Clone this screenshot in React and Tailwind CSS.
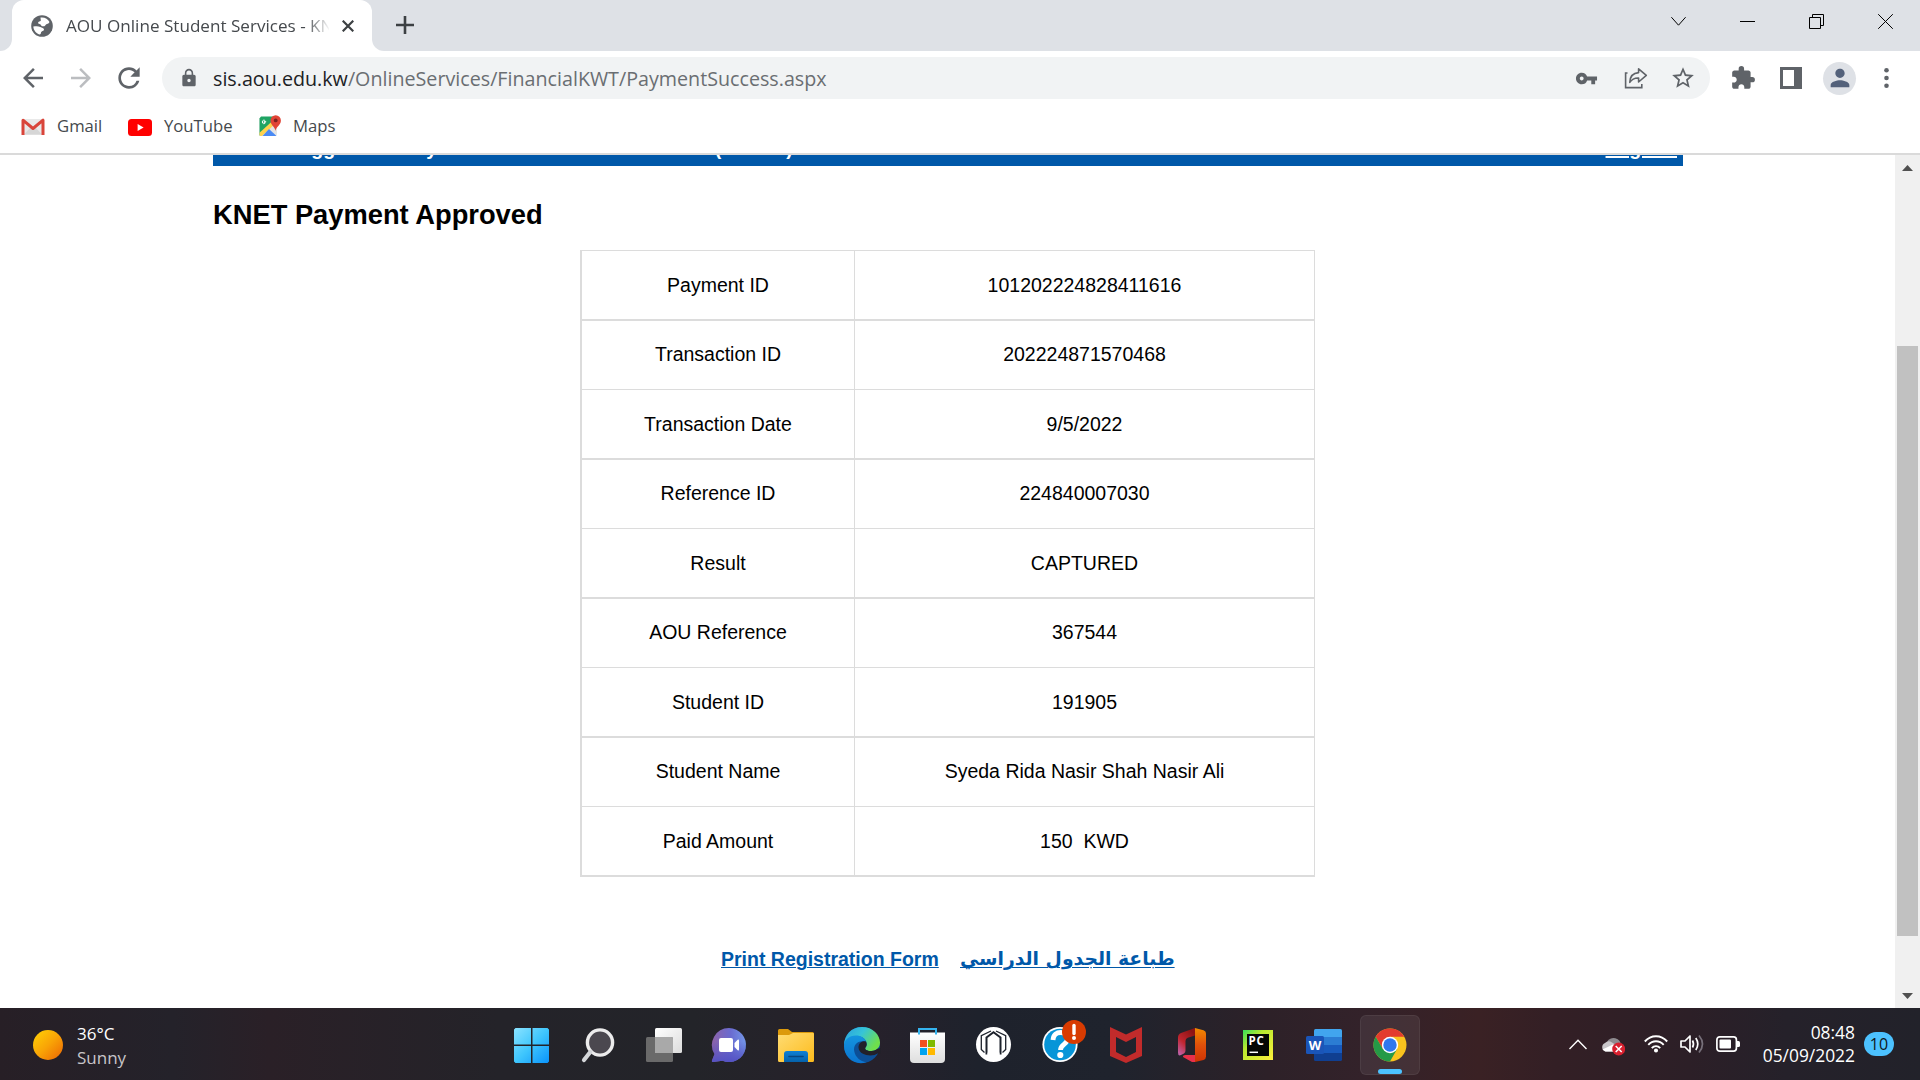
import {
  MdArrowBack,
  MdArrowForward,
  MdExtension,
  MdLock,
  MdPerson,
  MdRefresh,
  MdStarBorder,
  MdVpnKey,
} from "react-icons/md";

const rows = [
  ["Payment ID", "101202224828411616"],
  ["Transaction ID", "202224871570468"],
  ["Transaction Date", "9/5/2022"],
  ["Reference ID", "224840007030"],
  ["Result", "CAPTURED"],
  ["AOU Reference", "367544"],
  ["Student ID", "191905"],
  ["Student Name", "Syeda Rida Nasir Shah Nasir Ali"],
  ["Paid Amount", "150 \u00a0KWD"],
];

function GlobeIcon() {
  return (
    <svg className="size-[22px] shrink-0" viewBox="0 0 22 22">
      <circle cx="11" cy="11" r="10.800" fill="#5f6368" />
      <path
        d="M9.500 2.500c4-.6 7.500 1.200 9 4.500-1 2.200-2.500 1.500-3.500 2.500s-1 2-3 1.800c-2.500-.2-1.500-2-3.500-2.300C6.300 8.600 7 6.500 9 6.300c1.500-.2.500-1.800.500-3.800z"
        fill="#fff"
      />
      <path
        d="M2.300 11.500c3-.500 5.200-.500 7 .500 1.500.900 3.500.800 3.700 2.500.2 1.800-2.800 1.500-3 3 0 1-.300 1.800-1.500 1.900-3.500-1-6-4.200-6.200-7.900z"
        fill="#fff"
      />
    </svg>
  );
}

function TabStrip() {
  return (
    <div className="flex h-[51px] bg-[#dee1e6]">
      <div className="flex w-3 items-end bg-white">
        <div className="h-full w-full rounded-br-[12px] bg-[#dee1e6]" />
      </div>
      <div className="bg-[#dee1e6]">
        <div className="flex h-full w-[360px] items-center rounded-t-[12px] bg-white pl-[19px] pt-px">
          <GlobeIcon />
          <div className="ml-[13px] w-[263px] overflow-hidden whitespace-nowrap pb-px text-[17.1px] text-[#45494d] [mask-image:linear-gradient(to_right,black_240px,transparent_264px)]">
            AOU Online Student Services - KNET
          </div>
          <svg className="ml-[13px] size-3 shrink-0" viewBox="0 0 12 12" stroke="#3c4043" strokeWidth="2.2">
            <path d="M.7.7 11.3 11.3M11.3.7.7 11.3" />
          </svg>
        </div>
      </div>
      <div className="flex w-3 bg-white">
        <div className="h-full w-full rounded-bl-[12px] bg-[#dee1e6]" />
      </div>
      <svg className="ml-[12px] mt-[16px] size-[18px]" viewBox="0 0 18 18" stroke="#3c4043" strokeWidth="2.6">
        <path d="M9 0v18M0 9h18" />
      </svg>
      <div className="ml-auto mr-[27px] flex h-[43px] items-center gap-[54px] text-black">
        <svg className="size-[15px]" viewBox="0 0 15 15" fill="none" stroke="currentColor" strokeWidth="1">
          <path d="M.4 3.200 7.500 11.200 14.600 3.200" />
        </svg>
        <svg className="size-[15px]" viewBox="0 0 15 15" fill="none" stroke="currentColor" strokeWidth="1">
          <path d="M0 7.500h15" />
        </svg>
        <svg className="size-[15px]" viewBox="0 0 15 15" fill="none" stroke="currentColor" strokeWidth="1">
          <path d="M.5 3.500h11v11H.5zM3.500 3.500v-3h11v11h-3" />
        </svg>
        <svg className="size-[15px]" viewBox="0 0 15 15" fill="none" stroke="currentColor" strokeWidth="1">
          <path d="M.2.2 14.8 14.8M14.8.2.2 14.8" />
        </svg>
      </div>
    </div>
  );
}

function ShareIcon() {
  return (
    <svg className="h-[22px] w-[24px]" viewBox="0 0 24 22" fill="none" stroke="#5f6368" strokeWidth="1.6">
      <path d="M3.500 6H1.600v14.600h16.200V17" />
      <path d="M14.600 1.800 22.300 8.400l-7.700 6.600v-4C10.500 10.800 8 12 5.800 15.300 6 9.500 9.200 6 14.600 5.600z" strokeLinejoin="round" />
    </svg>
  );
}

function Toolbar() {
  return (
    <div className="flex h-[54px] items-center text-[#5f6368]">
      <MdArrowBack className="ml-[18px] size-[30px]" />
      <MdArrowForward className="ml-[18px] size-[30px] text-[#bbbdc0]" />
      <MdRefresh className="ml-[17px] size-[32px]" />
      <div className="ml-[17px] flex h-[42px] w-[1548px] items-center rounded-full bg-[#f1f3f4] pl-[17px] pr-[14px]">
        <MdLock className="size-[20px]" />
        <div className="ml-[14px] whitespace-nowrap pt-px text-[19.7px] text-[#6a6e72]">
          <span className="text-[#202124]">sis.aou.edu.kw</span>
          <span>/OnlineServices/FinancialKWT/PaymentSuccess.aspx</span>
        </div>
        <div className="ml-auto flex items-center">
          <MdVpnKey className="size-[23px]" />
          <div className="ml-[26px]">
            <ShareIcon />
          </div>
          <MdStarBorder className="ml-[22px] size-[26px]" />
        </div>
      </div>
      <MdExtension className="ml-[20px] size-[26px]" />
      <svg className="ml-[24px] size-[22px]" viewBox="0 0 22 22">
        <path fill="#5f6368" fillRule="evenodd" d="M0 0h22v22H0zM3 3v16h11V3z" />
      </svg>
      <div className="ml-[21px] flex size-[33px] items-center justify-center rounded-full bg-[#dee1e6]">
        <MdPerson className="size-[28px] text-[#53617a]" />
      </div>
      <svg className="ml-[28px] h-5 w-[5px]" viewBox="0 0 5 20" fill="#5f6368">
        <circle cx="2.500" cy="2.300" r="2.300" />
        <circle cx="2.500" cy="10" r="2.300" />
        <circle cx="2.500" cy="17.700" r="2.300" />
      </svg>
    </div>
  );
}

function Bookmarks() {
  return (
    <div className="flex h-[48px] items-center pb-[6px] pl-[21px] text-[16.7px] text-[#45494d]">
      <svg className="mt-0.5 h-[18px] w-6" viewBox="0 0 24 18">
        <rect x="1.500" y="1" width="21" height="16" rx="1" fill="#e9e9e9" />
        <path d="M3 16.500 9.500 9.500h5L21 16.500z" fill="#d6d6d6" />
        <path d="M2 17V2.200L12 10.500 22 2.200V17" fill="none" stroke="#d9453a" strokeWidth="3" strokeLinejoin="round" />
      </svg>
      <span className="ml-[12px] w-[46px]">Gmail</span>
      <svg className="ml-[25px] mt-0.5 h-[17px] w-6" viewBox="0 0 24 17">
        <rect width="24" height="17" rx="3.500" fill="#f00" />
        <path d="M9.600 5v7l6-3.500z" fill="#fff" />
      </svg>
      <span className="ml-[12px] w-[69px]">YouTube</span>
      <svg className="ml-[26px] h-[22px] w-[22px]" viewBox="0 0 22 22">
        <path d="M2 2h16v17a2 2 0 0 1-2 2H2a1.500 1.500 0 0 1-1.500-1.500v-16A1.500 1.500 0 0 1 2 2z" fill="#e4e4e4" />
        <path d="M2 1.500h12.500l1 7L1.500 20.500h-1v-17z" fill="#1fa463" />
        <path d="M.500 17.800 14 5.500l3 2.500L3 21H1.500a1.500 1.500 0 0 1-1-1z" fill="#ffd34d" />
        <path d="M3.500 21 10 14l7.500 7z" fill="#4a8af4" />
        <path d="M16.500 16c-.400-4.500-5-5.500-5-10.500a5.200 5.200 0 0 1 10.400 0c0 5-5 6-5.400 10.500z" fill="#e14436" />
        <circle cx="16.700" cy="5.400" r="1.900" fill="#7b2220" />
        <path d="M7.200 6.700H5v1h1.300c-.500 1.700-3 1.200-3-.700s1.900-2.300 2.900-1.300" fill="none" stroke="#fff" strokeWidth="1" />
      </svg>
      <span className="ml-[12px]">Maps</span>
    </div>
  );
}

function PaymentPage() {
  return (
    <div className="flex-1 overflow-hidden pl-[213px] font-['Liberation_Sans',Arial,sans-serif] text-[19.5px] text-black">
      <div className="h-[11px] w-[1470px] overflow-hidden bg-[#0058a9]">
        <div className="-mt-[18px] flex justify-between pr-[6px] font-bold leading-[22px] text-white">
          <span className="-ml-px">You are Logged in as Syeda Rida Nasir Shah Nasir Ali (191905)</span>
          <span className="underline decoration-2 underline-offset-1">Log out</span>
        </div>
      </div>
      <h1 className="mt-[33px] text-[27.3px] font-bold leading-[32px]">KNET Payment Approved</h1>
      <div className="ml-[367px] mt-[19px] w-[735px] border-l-2 border-r border-t border-[#dcdcdc]">
        {rows.map(([label, value], i) => (
          <div
            key={label}
            className={
              i % 2 === 0
                ? "flex h-[70px] border-b-2 border-[#dcdcdc]"
                : "flex h-[69px] border-b border-[#dcdcdc]"
            }
          >
            <div
              className={
                i % 2 === 0
                  ? "flex w-[273px] items-center justify-center border-r border-[#dcdcdc] pt-[2px]"
                  : "flex w-[273px] items-center justify-center border-r border-[#dcdcdc]"
              }
            >
              {label}
            </div>
            <div className={i % 2 === 0 ? "flex flex-1 items-center justify-center pt-[2px]" : "flex flex-1 items-center justify-center"}>
              {value}
            </div>
          </div>
        ))}
      </div>
      <div className="mt-[70px] flex pl-[508px] font-bold leading-6 text-[#0058a9]">
        <a className="w-[239px] whitespace-nowrap underline decoration-1 underline-offset-1">Print Registration Form</a>
        <a dir="rtl" className="whitespace-nowrap font-['DejaVu_Sans',sans-serif] text-[18.8px] underline decoration-1 underline-offset-2">
          طباعة الجدول الدراسي
        </a>
      </div>
    </div>
  );
}

function Scrollbar() {
  return (
    <div className="flex w-[25px] flex-col items-center bg-[#f0f0f0]">
      <svg className="mt-[10px] h-[6px] w-[11px]" viewBox="0 0 11 6" fill="#505050">
        <path d="M0 6 5.500 0 11 6z" />
      </svg>
      <div className="mt-[175px] h-[590px] w-[21px] bg-[#c1c1c1]" />
      <svg className="mt-[57px] h-[6px] w-[11px]" viewBox="0 0 11 6" fill="#505050">
        <path d="M0 0 5.500 6 11 0z" />
      </svg>
    </div>
  );
}

const taskIcons = [
  {
    name: "start",
    art: (
      <>
        <linearGradient id="st" x1="0" y1="0" x2="1" y2="1">
          <stop offset="0" stopColor="#8be3ff" />
          <stop offset=".5" stopColor="#3fc6fd" />
          <stop offset="1" stopColor="#0a93fb" />
        </linearGradient>
        <path fill="url(#st)" d="M13.500 13H29v16.500H12v-15zM30.500 13h15l1.500 1.500v15H30.500zM12 31h17v17H13.500L12 46.500zM30.500 31H47v15.500L45.500 48h-15z" />
      </>
    ),
  },
  {
    name: "search",
    art: (
      <>
        <circle cx="32" cy="27.500" r="12.600" fill="#4b484f" stroke="#ececec" strokeWidth="3.400" />
        <path d="M22.300 37 16 45" stroke="#d4d6d9" strokeWidth="4.200" strokeLinecap="round" />
      </>
    ),
  },
  {
    name: "taskview",
    art: (
      <>
        <linearGradient id="tv" x1="0" y1="0" x2="1" y2="1">
          <stop offset="0" stopColor="#fff" />
          <stop offset="1" stopColor="#dcdcdc" />
        </linearGradient>
        <rect x="21" y="13" width="27" height="25" rx="1.500" fill="url(#tv)" />
        <rect x="12" y="22" width="27" height="25" rx="1.500" fill="#6a6a6a" />
        <path d="M21 22h16.500a1.500 1.500 0 0 1 1.500 1.500V38H21z" fill="#a9a9a9" />
      </>
    ),
  },
  {
    name: "chat",
    art: (
      <>
        <linearGradient id="ch" x1="0" y1="0" x2="1" y2="0">
          <stop offset="0" stopColor="#8d62a8" />
          <stop offset=".55" stopColor="#6a6bd0" />
          <stop offset="1" stopColor="#7397e8" />
        </linearGradient>
        <linearGradient id="ch2" x1="0" y1="0" x2="0" y2="1">
          <stop offset=".4" stopColor="#5452c4" stopOpacity="0" />
          <stop offset="1" stopColor="#5452c4" />
        </linearGradient>
        <path fill="url(#ch)" d="M29 13a17 17 0 1 1-6.500 32.700L13 47c-1 0-1.300-.600-1-1.500L14.500 39A17 17 0 0 1 29 13z" />
        <path fill="url(#ch2)" d="M29 13a17 17 0 1 1-6.500 32.700L13 47c-1 0-1.300-.600-1-1.500L14.500 39A17 17 0 0 1 29 13z" />
        <rect x="19" y="23" width="14" height="14" rx="2" fill="#fff" />
        <path d="M34.500 28l3.200-3.200q1.300-.800 1.300 1v8.400q0 1.800-1.300 1L34.500 32z" fill="#fff" />
      </>
    ),
  },
  {
    name: "explorer",
    art: (
      <>
        <linearGradient id="ex" x1="0" y1="0" x2="1" y2="1">
          <stop offset="0" stopColor="#ffdc73" />
          <stop offset="1" stopColor="#fdbb1c" />
        </linearGradient>
        <linearGradient id="ex2" x1="0" y1="0" x2="0" y2="1">
          <stop offset="0" stopColor="#0f80d5" />
          <stop offset="1" stopColor="#0562ab" />
        </linearGradient>
        <path d="M12 15.500A1.500 1.500 0 0 1 13.500 14H22l4 3h20.500a1.500 1.500 0 0 1 1.500 1.500V24H12z" fill="#dc9a0c" />
        <path d="M12 20h11l4-2h20a1 1 0 0 1 1 1v26.500a1.500 1.500 0 0 1-1.500 1.500h-33a1.500 1.500 0 0 1-1.500-1.500z" fill="url(#ex)" />
        <path d="M18 47v-8q0-3 3-3h18q3 0 3 3v8z" fill="url(#ex2)" />
        <path d="M23 41.500h14" stroke="#08467f" strokeWidth="1.600" strokeLinecap="round" />
      </>
    ),
  },
  {
    name: "edge",
    art: (
      <>
        <linearGradient id="eg" x1="0" y1="0" x2="1" y2=".500">
          <stop offset="0" stopColor="#2a9fe0" />
          <stop offset=".5" stopColor="#36c4d8" />
          <stop offset="1" stopColor="#6fe04c" />
        </linearGradient>
        <linearGradient id="eb" x1="0" y1="0" x2="0" y2="1">
          <stop offset="0" stopColor="#1494df" />
          <stop offset="1" stopColor="#0b74cf" />
        </linearGradient>
        <circle cx="30" cy="30" r="18" fill="#0c4f97" />
        <path d="M12 30C12.500 20 19 12 30 12c11 0 18 8 18 15.500 0 5.500-4 8.500-8.500 8.500-4 0-6.300-1.300-6.300-2.600 0-1.200 1.500-1.400 1.500-4.400 0-4-4-8-10-8-5 0-10 3-12.700 9z" fill="url(#eg)" />
        <path d="M12 31c0-6 5-10.500 12-10.500 5 0 9 2.500 10.300 6.500-8-2.600-13.500 3-12 9.500 1 5.500 6 10 12 10.800C22 51 12 42 12 31z" fill="url(#eb)" />
        <path d="M34.700 29c0 3-1.500 3.200-1.500 4.400 0 1.300 2.300 2.600 6.300 2.600 2.500 0 4.600-1 6-2.200L49 33v5.500h-3.500C41 42 27 41 26.500 32.500 26.500 28 30 25.500 34 26.500z" fill="#22212a" />
      </>
    ),
  },
  {
    name: "store",
    art: (
      <>
        <linearGradient id="so" x1="0" y1="0" x2="0" y2="1">
          <stop offset="0" stopColor="#fff" />
          <stop offset="1" stopColor="#dedede" />
        </linearGradient>
        <path d="M12 17.500h35V44a4 4 0 0 1-4 4H16a4 4 0 0 1-4-4z" fill="url(#so)" />
        <path d="M21 19.500V14h17v5.500" fill="none" stroke="#35b4ef" strokeWidth="2" />
        <path d="M22 25h7v7h-7z" fill="#f25022" />
        <path d="M30 25h7v7h-7z" fill="#7fba00" />
        <path d="M22 33h7v7h-7z" fill="#00a4ef" />
        <path d="M30 33h7v7h-7z" fill="#ffb900" />
      </>
    ),
  },
  {
    name: "arch",
    art: (
      <>
        <circle cx="29.500" cy="29.500" r="17.500" fill="#fff" />
        <g fill="none" stroke="#1d222c" strokeWidth="1.300">
          <path d="M27 16 17.300 20.700V34.500l3.200 3" />
          <path d="M32 16 41.700 20.700V34.500l-3.200 3" />
        </g>
        <path d="M22.500 39.500V22.500l7-5.200 7 5.200V39.500" fill="none" stroke="#1d222c" strokeWidth="2" />
        <path d="M23.500 42.500v-5l6 3.200 6-3.200v5l-6-3.500z" fill="#fff" />
      </>
    ),
  },
  {
    name: "help",
    art: (
      <>
        <circle cx="30" cy="29.500" r="17.600" fill="#fff" />
        <circle cx="30" cy="29.500" r="15.800" fill="#0795d8" />
        <path d="M23 25c.300-5.500 4-7.500 7.500-7.500 4 0 7 2.300 7 6.200 0 5.800-7 5.600-7 11.300" fill="none" stroke="#fff" strokeWidth="4.800" />
        <circle cx="30.300" cy="40" r="3.100" fill="#fff" />
        <circle cx="44" cy="17" r="12" fill="#d83b01" />
        <path d="M44 10.500v8" stroke="#fff" strokeWidth="3.400" strokeLinecap="round" />
        <circle cx="44" cy="23" r="2" fill="#fff" />
      </>
    ),
  },
  {
    name: "shield",
    art: <path fill="#c12b2b" fillRule="evenodd" d="M14 12 30 19.500 46 12v29L30 48 14 41zM20 22v15l10 5 10-5V22l-10 5z" />,
  },
  {
    name: "office",
    art: (
      <>
        <linearGradient id="of" x1="0" y1="0" x2="0" y2="1">
          <stop offset="0" stopColor="#f28a00" />
          <stop offset=".5" stopColor="#e0500a" />
          <stop offset="1" stopColor="#cf3304" />
        </linearGradient>
        <linearGradient id="og" x1=".6" y1="0" x2="0" y2="1">
          <stop offset="0" stopColor="#8e1414" />
          <stop offset=".5" stopColor="#c0252e" />
          <stop offset="1" stopColor="#c069b8" />
        </linearGradient>
        <path d="M33 13 19 18q-3 1.200-3 4.500v15q0 4 3 2.500l3-1.600q1.500-.900 1.500-3V26q0-2.500 2.200-3.300L33 20.500z" fill="url(#og)" />
        <path d="M21 42q-.300-2 2.500-2H33v7h-3z" fill="#e8304a" />
        <path d="M33 13 41.500 15.300Q44 16 44 18.500v23q0 2.700-2.500 3.400L33 47z" fill="url(#of)" />
      </>
    ),
  },
  {
    name: "pycharm",
    art: (
      <>
        <linearGradient id="pc" x1="0" y1="0" x2="1" y2="1">
          <stop offset="0" stopColor="#35e05a" />
          <stop offset=".35" stopColor="#b9e82f" />
          <stop offset="1" stopColor="#fcf03c" />
        </linearGradient>
        <path d="M15 15h30v30H15z" fill="url(#pc)" />
        <path d="M19 19h22v22H19z" fill="#050705" />
        <text x="20.500" y="30.200" fontFamily="Open Sans" fontWeight="700" fontSize="11.500" letterSpacing=".7" fill="#fff">PC</text>
        <path d="M21.500 37.300h8.500" stroke="#fff" strokeWidth="1.500" />
      </>
    ),
  },
  {
    name: "word",
    art: (
      <>
        <path d="M20 15.500A1.500 1.500 0 0 1 21.500 14h25a1.500 1.500 0 0 1 1.500 1.500V22H20z" fill="#41a5ee" />
        <path d="M20 22h28v8H20z" fill="#2b7cd3" />
        <path d="M20 30h28v8H20z" fill="#185abd" />
        <path d="M20 38h28v6.500a1.500 1.500 0 0 1-1.500 1.500h-25a1.500 1.500 0 0 1-1.500-1.500z" fill="#103f91" />
        <rect x="12" y="21" width="18" height="18" rx="1.500" fill="#1a55b8" />
        <text x="21" y="34.600" textAnchor="middle" fontFamily="Open Sans" fontWeight="700" fontSize="13" fill="#fff">W</text>
      </>
    ),
  },
  {
    name: "chrome",
    active: true,
    art: (
      <>
        <circle cx="30" cy="30" r="16.500" fill="#f9c31e" />
        <path d="M15.700 21.750A16.500 16.500 0 0 1 44.300 21.750H30L22.900 34.100z" fill="#e33b2e" />
        <path d="M15.700 21.750A16.500 16.500 0 0 0 30 46.500L37.100 34.100 30 30 22.900 34.100z" fill="#259a47" />
        <circle cx="30" cy="30" r="8.200" fill="#fff" />
        <circle cx="30" cy="30" r="6.700" fill="#2f77ee" />
      </>
    ),
  },
];

function Taskbar() {
  return (
    <div className="flex h-[72px] bg-[linear-gradient(90deg,#271f26_0%,#24222a_9%,#2a2027_14%,#242329_26%,#232429_36%,#27212b_45%,#1e222c_51%,#1f232d_58%,#2d2128_66%,#33222a_71%,#3a2124_77%,#331f25_81%,#2c1f27_88%,#25212a_93%,#22222a_100%)] text-[17px] text-white">
      <div className="flex w-[502px] items-center pl-[33px]">
        <div className="mt-[2px] size-[30px] rounded-full bg-linear-to-br from-[#ffd305] via-[#f9a406] to-[#ea6204]" />
        <div className="ml-[14px] pt-[3px] leading-6">
          <div>36°C</div>
          <div className="text-[#c8c5c8]">Sunny</div>
        </div>
      </div>
      <div className="flex items-start gap-[6px] pt-[7px]">
        {taskIcons.map(({ name, art, active }) => (
          <div
            key={name}
            className={
              active
                ? "flex size-[60px] flex-col rounded-md bg-white/7 ring-1 ring-inset ring-white/6"
                : "flex size-[60px] flex-col"
            }
          >
            <svg className="h-[54px] w-[60px] shrink-0 overflow-visible" viewBox="0 0 60 54">
              {art}
            </svg>
            {active && <div className="h-[5px] w-6 self-center rounded-full bg-[#4cc2ff]" />}
          </div>
        ))}
      </div>
      <div className="ml-auto flex items-center pr-[26px]">
        <svg className="h-[11px] w-[18px]" viewBox="0 0 18 11" fill="none" stroke="#fff" strokeWidth="1.400">
          <path d="M.500 10 9 1.300 17.500 10" />
        </svg>
        <svg className="ml-[14px] mt-[4px] h-5 w-6" viewBox="0 0 24 20">
          <path d="M6 6a7 6 0 0 1 13.500 3l-2 4-8-1z" fill="#8e8b8f" />
          <path d="M4.500 15.500a4.500 4.500 0 0 1-.500-8.500 5.500 5.500 0 0 1 7-.500l5 3v6z" fill="#c9c7ca" />
          <path d="M1.500 13.500 12 8.500l4 2v5H4.500z" fill="#fff" />
          <circle cx="17.700" cy="13" r="6.500" fill="#d8202f" />
          <path d="M14.700 10l6 6M20.700 10l-6 6" stroke="#fff" strokeWidth="1.500" />
        </svg>
        <svg className="ml-[19px] h-[18px] w-6" viewBox="0 0 24 18" fill="none" stroke="#fff" strokeWidth="1.900">
          <path d="M.800 6.500c6.200-7 16.200-7 22.400 0M4.300 9.800c4.300-4.800 11.100-4.800 15.400 0M7.800 13.100c2.300-2.700 6.100-2.700 8.400 0" />
          <circle cx="12" cy="15.500" r="1.100" fill="#fff" />
        </svg>
        <svg className="ml-[12px] h-5 w-6" viewBox="0 0 24 20" fill="none" stroke="#fff" strokeWidth="1.700" strokeLinejoin="round">
          <path d="M1 7h4l5-5v16l-5-5H1z" />
          <path d="M12.500 6.500q2 3.500 0 7M15.800 4q4 6 0 12" />
          <path d="M19 1.500q7 8.500 0 17" stroke="#77707a" />
        </svg>
        <svg className="ml-[12px] h-4 w-6" viewBox="0 0 24 16">
          <rect x=".9" y=".9" width="19.500" height="14.200" rx="2.800" fill="none" stroke="#fff" strokeWidth="1.700" />
          <rect x="3.500" y="3.500" width="11.500" height="9" rx="1" fill="#fff" />
          <path d="M21 5h1.500q1.500 0 1.500 1.500v3q0 1.500-1.500 1.500H21z" fill="#fff" />
        </svg>
        <div className="ml-[22px] flex w-[93px] flex-col items-end text-[17.400px] leading-[23px]">
          <div>08:48</div>
          <div>05/09/2022</div>
        </div>
        <div className="ml-[9px] flex h-6 w-[30px] items-center justify-center rounded-full bg-[#4cc2ff] text-[16px] text-[#101820]">10</div>
      </div>
    </div>
  );
}

export default function App() {
  return (
    <div className="flex h-[1080px] w-[1920px] flex-col overflow-hidden bg-white font-['Open_Sans','Noto_Sans',sans-serif]">
      <TabStrip />
      <Toolbar />
      <Bookmarks />
      <div className="flex h-[855px] flex-col border-t-2 border-[#dadada]">
        <div className="flex h-[853px]">
          <PaymentPage />
          <Scrollbar />
        </div>
      </div>
      <Taskbar />
    </div>
  );
}
